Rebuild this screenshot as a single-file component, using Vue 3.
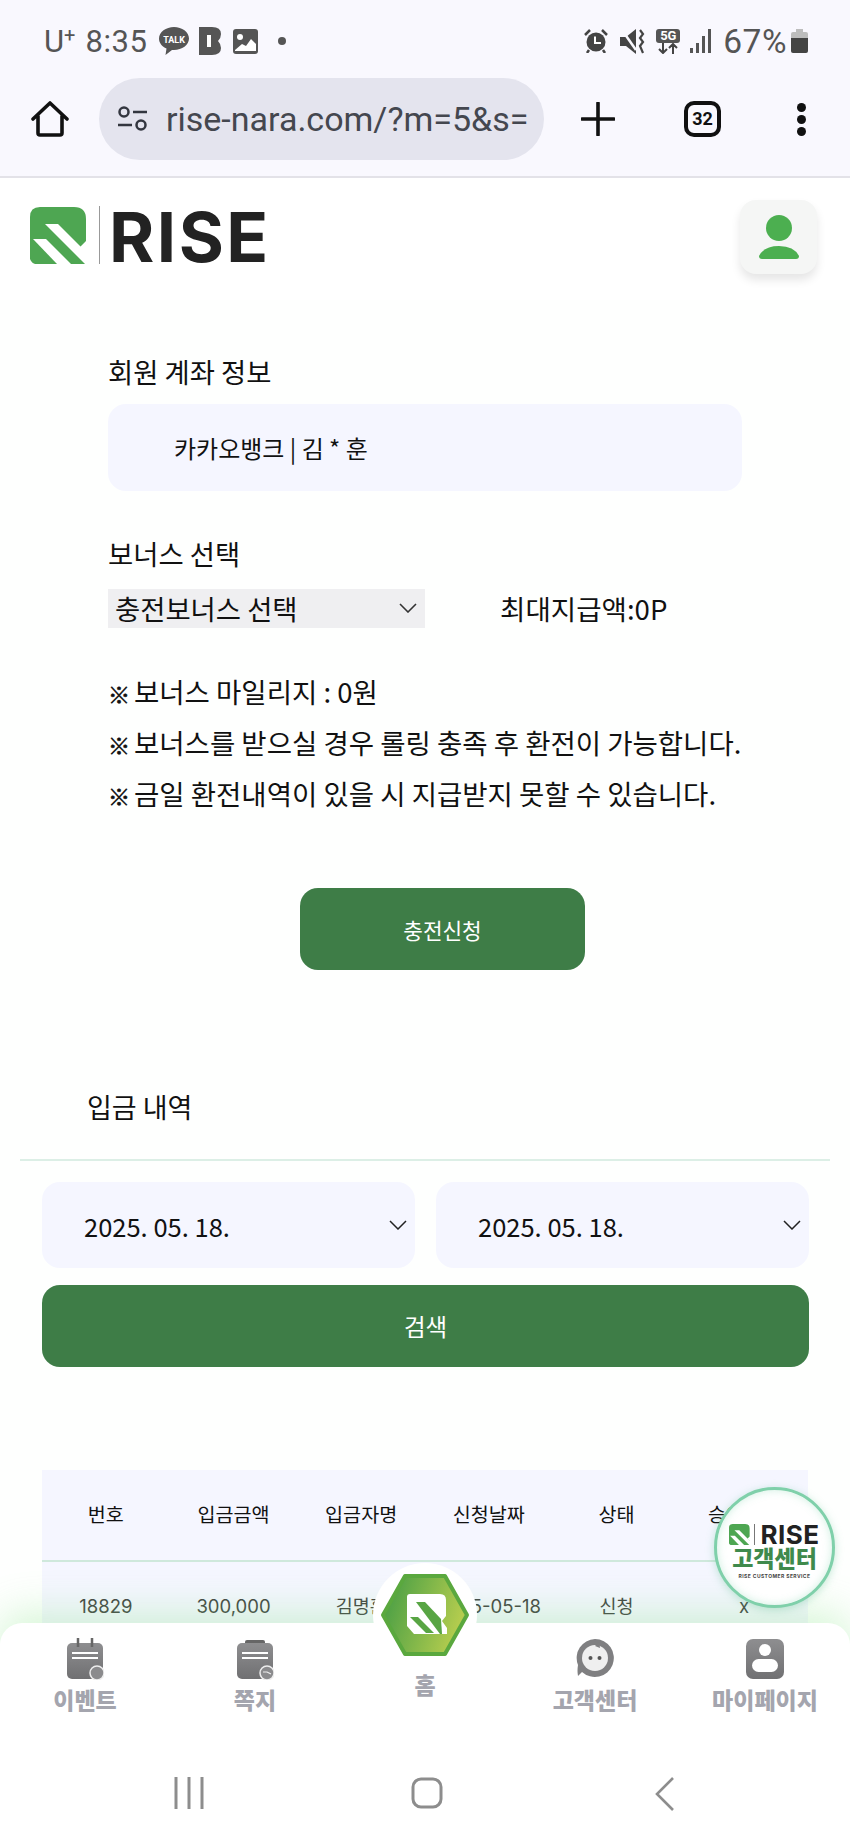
<template>
  <div class="phone">
    <!-- shared logo mark -->
    <svg class="defs" width="0" height="0">
      <symbol id="mark" viewBox="0 0 57 57">
        <path d="M10 0H44Q56 0 56 12V34L50 40L57 47V57H5Q3 57 1 54L0 52V10Q0 0 10 0Z" fill="#4ea652" />
        <path d="M15 17H28L58 47V58H56Z" fill="#fff" />
        <path d="M3 32H16L41 57H27Z" fill="#fff" />
      </symbol>
    </svg>

    <!-- phone status bar -->
    <div class="status">
      <div class="status-left">
        <span class="carrier">U<sup>+</sup></span>
        <span class="clock">8:35</span>
        <svg class="talk" width="30" height="28" viewBox="0 0 30 28">
          <path d="M15 0C7 0 0 5 0 11.500C0 16 3 19.500 7.500 21.500L6.500 28L13 23H15C23 23 30 18 30 11.500C30 5 23 0 15 0Z" fill="#555" />
          <text x="15" y="15.500" text-anchor="middle" class="talk-text">TALK</text>
        </svg>
        <svg class="blog" width="22" height="28" viewBox="0 0 22 28">
          <path d="M0 0H13Q22 0 22 7Q22 11 19 14Q22 17 22 21Q22 28 13 28H0Z" fill="#555" />
          <rect x="8" y="8" width="4" height="12" fill="#fff" />
        </svg>
        <svg class="pic" width="25" height="25" viewBox="0 0 25 25">
          <rect width="25" height="25" rx="3" fill="#555" />
          <circle cx="7" cy="8" r="3" fill="#fff" />
          <path d="M2 21L9 15L13 17L18 10L23 15V22H2Z" fill="#fff" />
        </svg>
        <span class="dot"></span>
      </div>
      <div class="status-right">
        <svg width="24" height="24" viewBox="0 0 24 24">
          <circle cx="12" cy="13" r="9.500" fill="#444" />
          <path d="M11 7.500V14H17" stroke="#fff" stroke-width="2" fill="none" />
          <path d="M1 6L6 1M23 6L18 1" stroke="#444" stroke-width="2.500" />
          <path d="M5 21L3 24M19 21L21 24" stroke="#444" stroke-width="2.500" />
        </svg>
        <svg class="mute" width="25" height="25" viewBox="0 0 25 25">
          <path d="M0 8H6L16 0V25L6 17H0Z" fill="#444" />
          <path d="M2 1L16 21" stroke="#f9f8fe" stroke-width="2.500" />
          <path d="M20 1L23 5L20 9L23 13L20 17L23 24" stroke="#444" stroke-width="2.200" fill="none" />
        </svg>
        <div class="net">
          <span class="net-5g">5G</span>
          <svg width="24" height="11" viewBox="0 0 24 11">
            <path d="M7 0V10M3 6L7 10L11 6M17 11V1M13 5L17 1L21 5" stroke="#444" stroke-width="2" fill="none" />
          </svg>
        </div>
        <svg class="signal" width="22" height="24" viewBox="0 0 22 24">
          <rect x="0" y="19" width="3" height="5" fill="#555" />
          <rect x="6" y="14" width="3" height="10" fill="#555" />
          <rect x="12" y="7" width="3" height="17" fill="#555" />
          <rect x="18" y="0" width="3" height="24" fill="#555" />
        </svg>
        <span class="percent">67%</span>
        <svg class="battery" width="17" height="24" viewBox="0 0 17 24">
          <path d="M5 0H12V3H15Q17 3 17 5V9H0V5Q0 3 2 3H5Z" fill="#bdbdbd" />
          <path d="M0 9H17V22Q17 24 15 24H2Q0 24 0 22Z" fill="#444" />
        </svg>
      </div>
    </div>

    <!-- browser toolbar -->
    <div class="toolbar">
      <svg class="home-ico" width="38" height="38" viewBox="0 0 38 38">
        <path d="M2 19L19 3L36 19M7 16V33Q7 35 9 35H29Q31 35 31 33V16" fill="none" stroke="#111" stroke-width="3.600" stroke-linejoin="round" stroke-linecap="round" />
      </svg>
      <div class="url-pill">
        <svg width="30" height="26" viewBox="0 0 30 26">
          <circle cx="7" cy="6" r="4.500" fill="none" stroke="#33363f" stroke-width="2.500" />
          <path d="M16 6H30M1 19H15" stroke="#33363f" stroke-width="2.500" />
          <circle cx="24" cy="19" r="4.500" fill="none" stroke="#33363f" stroke-width="2.500" />
        </svg>
        <span class="url">rise-nara.com/?m=5&amp;s=</span>
      </div>
      <svg class="plus" width="34" height="34" viewBox="0 0 34 34">
        <path d="M17 1V33M1 17H33" stroke="#111" stroke-width="3.600" stroke-linecap="round" />
      </svg>
      <div class="tabs">32</div>
      <div class="kebab"><i></i><i></i><i></i></div>
    </div>

    <!-- site header -->
    <header class="site-head">
      <div class="logo">
        <svg width="57" height="57"><use href="#mark" /></svg>
        <span class="logo-bar"></span>
        <span class="logo-word">RISE</span>
      </div>
      <div class="user-btn">
        <svg width="40" height="44" viewBox="0 0 40 44">
          <circle cx="20" cy="13" r="13" fill="#4caf50" />
          <path d="M0 41Q5 31 20 31Q35 31 40 41Q40 44 37 44H3Q0 44 0 41Z" fill="#4caf50" />
        </svg>
      </div>
    </header>

    <!-- charge form -->
    <section class="form">
      <div class="field-label">회원 계좌 정보</div>
      <div class="account">카카오뱅크 | 김 * 훈</div>
      <div class="field-label second">보너스 선택</div>
      <div class="bonus-row">
        <div class="bonus-select">
          <span>충전보너스 선택</span>
          <svg width="18" height="10" viewBox="0 0 18 10"><path d="M1 1L9 9L17 1" fill="none" stroke="#333" stroke-width="1.600" /></svg>
        </div>
        <div class="max-pay">최대지급액:0P</div>
      </div>
      <ul class="notes">
        <li v-for="note in notes" :key="note"><b class="mark">※</b>{{ note }}</li>
      </ul>
      <button class="charge-btn">충전신청</button>
    </section>

    <!-- deposit history -->
    <section class="history">
      <h2 class="history-title">입금 내역</h2>
      <div class="search">
        <div class="date-row">
          <div v-for="(d, i) in dates" :key="i" class="date-box">
            <span>{{ d }}</span>
            <svg width="18" height="10" viewBox="0 0 18 10"><path d="M1 1L9 9L17 1" fill="none" stroke="#222" stroke-width="1.500" /></svg>
          </div>
        </div>
        <button class="search-btn">검색</button>
      </div>
      <div class="table">
        <div class="t-head">
          <span v-for="h in heads" :key="h">{{ h }}</span>
        </div>
        <div class="t-row">
          <span v-for="c in row" :key="c">{{ c }}</span>
        </div>
      </div>
    </section>

    <!-- floating customer center -->
    <div class="fab">
      <div class="fab-logo">
        <svg width="21" height="21"><use href="#mark" /></svg>
        <span class="fab-bar"></span>
        <span class="fab-word">RISE</span>
      </div>
      <div class="fab-title">고객센터</div>
      <div class="fab-sub">RISE CUSTOMER SERVICE</div>
    </div>

    <!-- bottom navigation -->
    <nav class="nav">
      <div class="nav-items">
        <div class="nav-item">
          <svg width="38" height="42" viewBox="0 0 38 42">
            <defs>
              <linearGradient id="gray" x1="0" y1="0" x2="0" y2="1">
                <stop offset="0" stop-color="#8e8e90" />
                <stop offset="1" stop-color="#707072" />
              </linearGradient>
            </defs>
            <rect x="1" y="5" width="36" height="36" rx="5" fill="url(#gray)" />
            <path d="M12 0V9M26 0V9" stroke="#666" stroke-width="2.500" />
            <path d="M6 15H32M6 20H32" stroke="#fff" stroke-width="2.200" />
            <circle cx="31" cy="35" r="7" fill="#8b8b8d" stroke="#eee" stroke-width="1.500" />
          </svg>
          <span>이벤트</span>
        </div>
        <div class="nav-item">
          <svg width="38" height="42" viewBox="0 0 38 42">
            <rect x="9" y="2" width="20" height="6" rx="2" fill="#666" />
            <rect x="1" y="5" width="36" height="36" rx="5" fill="url(#gray)" />
            <path d="M6 15H32M6 20H32" stroke="#fff" stroke-width="2.200" />
            <circle cx="31" cy="35" r="7" fill="#8b8b8d" stroke="#eee" stroke-width="1.500" />
            <path d="M27 34L31 34L35 36" stroke="#eee" stroke-width="1.200" fill="none" />
          </svg>
          <span>쪽지</span>
        </div>
        <div class="nav-item home-item">
          <div class="hex-wrap">
            <svg width="90" height="84" viewBox="0 0 90 84">
              <defs>
                <linearGradient id="hexfill" x1="0" y1="0" x2="1" y2="0.300">
                  <stop offset="0" stop-color="#3f9a44" />
                  <stop offset="1" stop-color="#b3cc4e" />
                </linearGradient>
              </defs>
              <path d="M25 3H65L87 42L65 81H25L3 42Z" fill="url(#hexfill)" stroke="#5aa83e" stroke-width="4" stroke-linejoin="round" />
              <path d="M27 24Q27 21 30 21H60Q66 21 66 27V43L62 48L67 55V61H34L27 53Z" fill="#fff" />
              <path d="M36 29H45L61 46L62 61H60Z" fill="#58a544" />
              <path d="M30 44H38L54 60H46Z" fill="#58a544" />
            </svg>
          </div>
          <span>홈</span>
        </div>
        <div class="nav-item">
          <svg width="38" height="42" viewBox="0 0 38 42">
            <path d="M19 1A19 19 0 1 1 6 34L2 38Q1 33 2 27A19 19 0 0 1 19 1Z" fill="#7f7f81" />
            <circle cx="19" cy="20" r="13" fill="#efefef" />
            <path d="M19 8Q22 4 25 3Q23 7 24 10Z" fill="#7f7f81" />
            <circle cx="14.500" cy="20" r="2" fill="#555" />
            <circle cx="23.500" cy="20" r="2" fill="#555" />
          </svg>
          <span>고객센터</span>
        </div>
        <div class="nav-item">
          <svg width="38" height="42" viewBox="0 0 38 42">
            <rect y="1" width="38" height="40" rx="7" fill="url(#gray)" />
            <circle cx="19" cy="12" r="6" fill="#fff" />
            <rect x="6" y="21" width="26" height="13" rx="6.500" fill="#fff" />
          </svg>
          <span>마이페이지</span>
        </div>
      </div>
      <div class="gesture">
        <div class="g-cell">
          <svg width="30" height="32" viewBox="0 0 30 32">
            <path d="M2 0V32M15 0V32M28 0V32" stroke="#8d8d8d" stroke-width="3" />
          </svg>
        </div>
        <div class="g-cell">
          <svg width="32" height="32" viewBox="0 0 32 32">
            <rect x="2" y="2" width="28" height="28" rx="8" fill="none" stroke="#8d8d8d" stroke-width="3" />
          </svg>
        </div>
        <div class="g-cell">
          <svg width="20" height="34" viewBox="0 0 20 34">
            <path d="M18 1L2 17L18 33" fill="none" stroke="#8d8d8d" stroke-width="2.600" />
          </svg>
        </div>
      </div>
    </nav>
  </div>
</template>

<script setup>
const notes = [
  '보너스 마일리지 : 0원',
  '보너스를 받으실 경우 롤링 충족 후 환전이 가능합니다.',
  '금일 환전내역이 있을 시 지급받지 못할 수 있습니다.'
]
const dates = ['2025. 05. 18.', '2025. 05. 18.']
const heads = ['번호', '입금금액', '입금자명', '신청날짜', '상태', '승인날짜']
const row = ['18829', '300,000', '김명훈', '2025-05-18', '신청', 'x']
</script>

<style>
html, body {
  margin: 0;
  background: #fff;
}
</style>

<style scoped>
.phone {
  position: relative;
  width: 850px;
  height: 1842px;
  overflow: hidden;
  background: #fefffe;
  font-family: "Noto Sans CJK KR", "Noto Sans", sans-serif;
  color: #111;
}

.defs {
  position: absolute;
}

/* status bar */
.status {
  display: flex;
  justify-content: space-between;
  align-items: center;
  height: 79px;
  box-sizing: border-box;
  padding: 3px 42px 0 44px;
  background: #f9f8fe;
  font-family: Roboto, sans-serif;
  color: #555;
}

.status-left,
.status-right {
  display: flex;
  align-items: center;
}

.carrier {
  font-size: 31px;
  line-height: 1;
}

.carrier sup {
  font-size: 20px;
  line-height: 0;
  vertical-align: 10px;
}

.clock {
  font-size: 31px;
  margin-left: 10px;
  letter-spacing: 0.6px;
}

.talk {
  margin-left: 11px;
}

.talk-text {
  font: 700 9px Roboto, sans-serif;
  fill: #fff;
}

.blog {
  margin-left: 10px;
}

.pic {
  margin-left: 12px;
}

.dot {
  width: 8px;
  height: 8px;
  margin-left: 20px;
  border-radius: 50%;
  background: #555;
}

.mute {
  margin-left: 12px;
}

.net {
  display: flex;
  flex-direction: column;
  align-items: center;
  margin-left: 11px;
}

.net-5g {
  width: 24px;
  height: 14px;
  border-radius: 3px;
  background: #555;
  color: #fff;
  font-size: 13px;
  font-weight: 700;
  line-height: 14px;
  text-align: center;
}

.signal {
  margin-left: 10px;
}

.percent {
  margin-left: 11px;
  font-size: 33.5px;
  letter-spacing: 0.5px;
}

.battery {
  margin-left: 4px;
}

/* browser toolbar */
.toolbar {
  display: flex;
  align-items: center;
  height: 99px;
  box-sizing: border-box;
  padding: 0 0 17px 31px;
  background: #f9f8fe;
  border-bottom: 2px solid #e3e2e8;
}

.url-pill {
  display: flex;
  align-items: center;
  gap: 19px;
  width: 445px;
  height: 82px;
  box-sizing: border-box;
  margin-left: 30px;
  padding-left: 18px;
  border-radius: 41px;
  background: #e4e4ee;
}

.url {
  font-family: Roboto, sans-serif;
  font-size: 34px;
  color: #44474f;
  white-space: nowrap;
}

.plus {
  margin-left: 37px;
}

.tabs {
  width: 37px;
  height: 36px;
  margin-left: 69px;
  box-sizing: border-box;
  border: 4px solid #111;
  border-radius: 10px;
  font-family: Roboto, sans-serif;
  font-size: 18px;
  font-weight: 700;
  line-height: 28px;
  text-align: center;
}

.kebab {
  display: flex;
  flex-direction: column;
  gap: 3px;
  margin-left: 76px;
}

.kebab i {
  width: 9px;
  height: 9px;
  border-radius: 50%;
  background: #111;
}

/* site header */
.site-head {
  display: flex;
  justify-content: space-between;
  align-items: flex-start;
  height: 122px;
  box-sizing: border-box;
  padding: 26px 33px 0 30px;
  background: #fff;
}

.logo {
  display: flex;
  align-items: center;
}

.logo-bar {
  width: 1px;
  height: 58px;
  margin: 0 9px 0 12px;
  background: #999;
}

.logo-word {
  margin-top: 5px;
  font-family: Inter, sans-serif;
  font-size: 69px;
  font-weight: 700;
  line-height: 57px;
  letter-spacing: 2.5px;
  color: #222;
}

.user-btn {
  display: flex;
  align-items: center;
  justify-content: center;
  width: 77px;
  height: 74px;
  margin-top: -4px;
  border-radius: 16px;
  background: #f5f6f5;
  box-shadow: 0 6px 10px rgba(0, 0, 0, 0.1);
}

/* charge form */
.form {
  padding: 53px 108px 0;
}

.field-label {
  font-size: 27.4px;
  line-height: 36px;
}

.field-label.second {
  margin-top: 44px;
}

.account {
  height: 87px;
  margin-top: 15px;
  padding-left: 66px;
  border-radius: 18px;
  background: #f5f6ff;
  font-size: 24px;
  line-height: 87px;
}

.bonus-row {
  display: flex;
  align-items: center;
  margin-top: 17px;
}

.bonus-select {
  display: flex;
  justify-content: space-between;
  align-items: center;
  width: 317px;
  height: 39px;
  box-sizing: border-box;
  padding: 0 8px 0 7px;
  background: #efeff1;
  font-size: 27.4px;
}

.max-pay {
  margin-left: 75px;
  font-size: 27.6px;
}

.notes {
  margin: 38px 0 0;
  padding: 0;
  list-style: none;
  font-size: 27.5px;
  line-height: 51px;
  white-space: nowrap;
}

.notes li {
  height: 51px;
}

.mark {
  display: inline-block;
  width: 26px;
  font-size: 22px;
  font-weight: 900;
  line-height: 1;
  -webkit-text-stroke: 0.6px #111;
}

.charge-btn {
  display: block;
  width: 285px;
  height: 82px;
  margin: 69px 0 0 192px;
  border: 0;
  border-radius: 18px;
  background: #3e7d47;
  color: #fff;
  font-family: inherit;
  font-size: 21.3px;
}

/* deposit history */
.history-title {
  height: 71px;
  margin: 118px 20px 0;
  padding-left: 67px;
  border-bottom: 2px solid #dcefe6;
  font-size: 27px;
  font-weight: 400;
  line-height: 38px;
}

.search {
  padding: 21px 41px 0 42px;
}

.date-row {
  display: flex;
  gap: 21px;
}

.date-box {
  display: flex;
  justify-content: space-between;
  align-items: center;
  flex: 1;
  height: 86px;
  box-sizing: border-box;
  padding: 0 8px 0 42px;
  border-radius: 18px;
  background: #f5f6ff;
  font-size: 25.5px;
}

.search-btn {
  display: block;
  width: 100%;
  height: 82px;
  margin-top: 17px;
  border: 0;
  border-radius: 18px;
  background: #3e7d47;
  color: #fff;
  font-family: inherit;
  font-size: 23.5px;
}

.table {
  margin: 103px 42px 0;
  background: #f5f6ff;
  font-size: 19.6px;
}

.t-head,
.t-row {
  display: grid;
  grid-template-columns: repeat(6, 1fr);
  text-align: center;
  white-space: nowrap;
}

.t-head {
  height: 90px;
  border-bottom: 2px solid #cfe8dc;
  line-height: 88px;
}

.t-row {
  height: 100px;
  color: #444;
  font-family: Inter, "Noto Sans CJK KR", sans-serif;
  font-size: 18.5px;
  line-height: 88px;
}

/* floating button */
.fab {
  position: absolute;
  left: 714px;
  top: 1487px;
  z-index: 3;
  display: flex;
  flex-direction: column;
  align-items: center;
  width: 121px;
  height: 121px;
  box-sizing: border-box;
  padding-top: 34px;
  border: 3px solid #7fd0aa;
  border-radius: 50%;
  background: #fff;
  box-shadow: 0 2px 8px rgba(90, 190, 140, 0.35), inset 0 0 8px rgba(120, 210, 170, 0.35);
}

.fab-logo {
  display: flex;
  align-items: center;
  height: 21px;
}

.fab-bar {
  width: 1px;
  height: 21px;
  margin: 0 5px 0 4px;
  background: #777;
}

.fab-word {
  font-family: Inter, sans-serif;
  font-size: 26px;
  font-weight: 700;
  line-height: 21px;
  letter-spacing: 0.5px;
  color: #222;
}

.fab-title {
  font-size: 23px;
  font-weight: 900;
  line-height: 25px;
  color: #3f8a4c;
  white-space: nowrap;
}

.fab-sub {
  margin-top: 3px;
  font-family: Inter, sans-serif;
  font-size: 5px;
  font-weight: 700;
  line-height: 6px;
  letter-spacing: 0.4px;
  color: #444;
  white-space: nowrap;
}

/* bottom nav */
.nav {
  position: absolute;
  left: 0;
  right: 0;
  bottom: 0;
  z-index: 2;
  height: 219px;
  border-radius: 22px 22px 0 0;
  background: #fff;
  box-shadow: 0 -10px 40px rgba(120, 225, 120, 0.3);
}

.nav-items {
  display: grid;
  grid-template-columns: repeat(5, 1fr);
  height: 154px;
}

.nav-item {
  display: flex;
  flex-direction: column;
  align-items: center;
  padding-top: 15px;
  font-size: 23px;
  font-weight: 900;
  line-height: 28px;
  color: #a4a5ae;
  white-space: nowrap;
}

.nav-item svg {
  display: block;
}

.nav-item > span {
  margin-top: 5px;
}

.home-item {
  position: relative;
  padding-top: 42px;
}

.hex-wrap {
  position: absolute;
  top: -60px;
  left: 33px;
  display: flex;
  align-items: center;
  justify-content: center;
  width: 104px;
  height: 104px;
  border-radius: 50%;
  background: #fff;
}

.gesture {
  display: grid;
  grid-template-columns: repeat(3, 238px);
  padding-left: 70px;
}

.g-cell {
  display: flex;
  justify-content: center;
}
</style>
